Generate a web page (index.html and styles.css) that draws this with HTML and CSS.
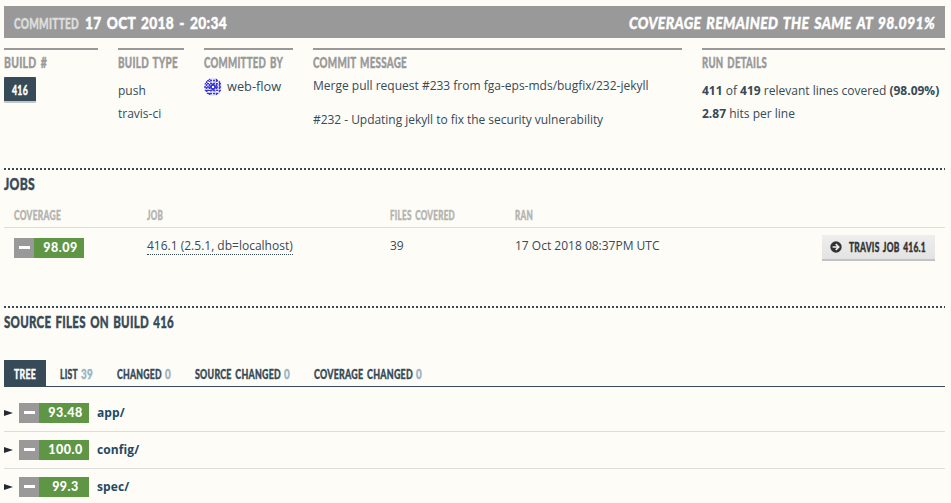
FILE: index.html
```html
<!DOCTYPE html>
<html lang="en">
<head>
<meta charset="utf-8">
<title>Build 416</title>
<link rel="stylesheet" href="styles.css">
</head>
<body>
<header class="banner">
  <div class="when">
    <svg class="cond muted" width="65" height="20"><text y="15" font-size="15" textLength="65" lengthAdjust="spacingAndGlyphs">COMMITTED</text></svg>
    <svg class="cond" width="142" height="20"><text y="15" font-size="17" textLength="142" lengthAdjust="spacingAndGlyphs">17 OCT 2018 - 20:34</text></svg>
  </div>
  <svg class="cond slanted" width="307" height="20"><text y="15" font-size="17" textLength="306" lengthAdjust="spacingAndGlyphs">COVERAGE REMAINED THE SAME AT 98.091%</text></svg>
</header>

<section class="details">
  <div class="detail">
    <svg class="cond label" width="43" height="20"><text y="15" font-size="14.5" textLength="43" lengthAdjust="spacingAndGlyphs">BUILD #</text></svg>
    <a class="build-no"><svg class="cond" width="16" height="20"><text y="15" font-size="13" textLength="16" lengthAdjust="spacingAndGlyphs">416</text></svg></a>
  </div>
  <div class="detail">
    <svg class="cond label" width="60" height="20"><text y="15" font-size="14.5" textLength="60" lengthAdjust="spacingAndGlyphs">BUILD TYPE</text></svg>
    <p class="spaced">push</p>
    <p>travis-ci</p>
  </div>
  <div class="detail">
    <svg class="cond label" width="79" height="20"><text y="15" font-size="14.5" textLength="79" lengthAdjust="spacingAndGlyphs">COMMITTED BY</text></svg>
    <div class="author">
      <svg class="avatar" width="18" height="18" viewBox="0 0 18 18">
        <defs><clipPath id="round"><circle cx="9" cy="9" r="9"/></clipPath></defs>
        <g clip-path="url(#round)">
          <rect width="18" height="18" fill="#e4e4fb"/>
          <path fill="none" stroke="#3b36d6" stroke-width="1.5" stroke-dasharray="2 1" d="M0 2.5h18M0 5.5h18M0 9h18M0 12.5h18M0 15.5h18M2.5 0v18M5.5 0v18M12.5 0v18M15.5 0v18"/>
          <path fill="#3b36d6" d="M7 7l2-2 2 2 2 2-2 2-2 2-2-2-2-2z"/>
          <path fill="#fff" d="M8 8h2v2H8zM4 4h2v1H4zM12 4h2v1h-2zM4 13h2v1H4zM12 13h2v1h-2z"/>
        </g>
      </svg>
      <span>web-flow</span>
    </div>
  </div>
  <div class="detail">
    <svg class="cond label" width="94" height="20"><text y="15" font-size="14.5" textLength="94" lengthAdjust="spacingAndGlyphs">COMMIT MESSAGE</text></svg>
    <p class="message">Merge pull request #233 from fga-eps-mds/bugfix/232-jekyll</p>
    <p class="message second">#232 - Updating jekyll to fix the security vulnerability</p>
  </div>
  <div class="detail">
    <svg class="cond label" width="65" height="20"><text y="15" font-size="14.5" textLength="65" lengthAdjust="spacingAndGlyphs">RUN DETAILS</text></svg>
    <p class="spaced"><b>411</b> of <b>419</b> relevant lines covered <b>(98.09%)</b></p>
    <p><b>2.87</b> hits per line</p>
  </div>
</section>

<section class="jobs">
  <svg class="cond title" width="31" height="24"><text y="20" font-size="17" textLength="31" lengthAdjust="spacingAndGlyphs">JOBS</text></svg>
  <div class="job-grid head">
    <svg class="cond" width="47" height="20"><text y="15" font-size="12.5" textLength="47" lengthAdjust="spacingAndGlyphs">COVERAGE</text></svg>
    <svg class="cond" width="16" height="20"><text y="15" font-size="12.5" textLength="16" lengthAdjust="spacingAndGlyphs">JOB</text></svg>
    <svg class="cond" width="65" height="20"><text y="15" font-size="12.5" textLength="65" lengthAdjust="spacingAndGlyphs">FILES COVERED</text></svg>
    <svg class="cond" width="18" height="20"><text y="15" font-size="12.5" textLength="18" lengthAdjust="spacingAndGlyphs">RAN</text></svg>
  </div>
  <div class="job-grid row">
    <span class="badge"><i></i><b>98.09</b></span>
    <span><a class="job-link">416.1 (2.5.1, db=localhost)</a></span>
    <span>39</span>
    <span>17 Oct 2018 08:37PM UTC</span>
    <a class="travis">
      <svg width="12" height="12" viewBox="0 0 12 12"><circle cx="6" cy="6" r="5.7" fill="#333"/><path d="M2.6 6h5.8M5.8 3.1L8.7 6 5.8 8.9" fill="none" stroke="#eee" stroke-width="1.7"/></svg>
      <svg class="cond" width="77" height="20"><text y="15" font-size="13" textLength="77" lengthAdjust="spacingAndGlyphs">TRAVIS JOB 416.1</text></svg>
    </a>
  </div>
</section>

<section class="files">
  <svg class="cond title" width="170" height="24"><text y="20" font-size="17" textLength="170" lengthAdjust="spacingAndGlyphs">SOURCE FILES ON BUILD 416</text></svg>
  <nav class="tabs">
    <a class="tab active"><svg class="cond" width="22" height="20"><text y="15" font-size="13.5" textLength="22" lengthAdjust="spacingAndGlyphs">TREE</text></svg></a>
    <a class="tab"><svg class="cond" width="18" height="20"><text y="15" font-size="13.5" textLength="18" lengthAdjust="spacingAndGlyphs">LIST</text></svg><svg class="cond count" width="12" height="20"><text y="15" font-size="13.5" textLength="12" lengthAdjust="spacingAndGlyphs">39</text></svg></a>
    <a class="tab"><svg class="cond" width="45" height="20"><text y="15" font-size="13.5" textLength="45" lengthAdjust="spacingAndGlyphs">CHANGED</text></svg><svg class="cond count" width="6" height="20"><text y="15" font-size="13.5" textLength="6" lengthAdjust="spacingAndGlyphs">0</text></svg></a>
    <a class="tab"><svg class="cond" width="86" height="20"><text y="15" font-size="13.5" textLength="86" lengthAdjust="spacingAndGlyphs">SOURCE CHANGED</text></svg><svg class="cond count" width="6" height="20"><text y="15" font-size="13.5" textLength="6" lengthAdjust="spacingAndGlyphs">0</text></svg></a>
    <a class="tab"><svg class="cond" width="99" height="20"><text y="15" font-size="13.5" textLength="99" lengthAdjust="spacingAndGlyphs">COVERAGE CHANGED</text></svg><svg class="cond count" width="6" height="20"><text y="15" font-size="13.5" textLength="6" lengthAdjust="spacingAndGlyphs">0</text></svg></a>
  </nav>
  <div class="file"><svg class="arrow" width="9" height="6"><path d="M0 0l9 3-9 3z"/></svg><span class="badge"><i></i><b>93.48</b></span><a>app/</a></div>
  <div class="file"><svg class="arrow" width="9" height="6"><path d="M0 0l9 3-9 3z"/></svg><span class="badge"><i></i><b>100.0</b></span><a>config/</a></div>
  <div class="file"><svg class="arrow" width="9" height="6"><path d="M0 0l9 3-9 3z"/></svg><span class="badge"><i></i><b>99.3</b></span><a>spec/</a></div>
</section>
</body>
</html>
```
FILE: styles.css
```css
* { box-sizing: border-box; }
html { overflow: hidden; }
body {
  margin: 0;
  padding: 6px 6px 0 4px;
  height: 503px;
  overflow: hidden;
  background: #fdfcf7;
  color: #364a57;
  font: 12px/23px "Open Sans", sans-serif;
}
p { margin: 0; white-space: nowrap; }
svg { display: block; flex: none; }
.cond { overflow: visible; fill: currentColor; stroke: currentColor; stroke-width: .4px; font-family: Lato, sans-serif; font-weight: 900; word-spacing: 2px; letter-spacing: .4px; }

.banner { display: flex; justify-content: space-between; height: 32px; padding: 8px 9px 0 10px; background: #999; color: #fff; }
.when { display: flex; gap: 6px; }
.muted { color: #ddd; }
.slanted { font-style: italic; }

.details { display: grid; grid-template-columns: 94px 66px 89px 369px 243px; column-gap: 20px; height: 120px; margin-top: 10px; }
.detail { border-top: 2px solid #999; padding-top: 3px; }
.label { color: #999; }
.build-no { display: flex; width: 32px; height: 26px; margin-top: 4px; padding: 3px 8px 0; background: #364a57; border-bottom: 2px solid #c4c6c5; border-radius: 1px; color: #fff; }
.spaced { margin-top: 6px; }
.author { display: flex; gap: 5px; margin-top: 2px; font-size: 12.8px; }
.avatar { margin-top: 3px; }
.message { line-height: 17px; margin-top: 4px; }
.message.second { margin-top: 17px; letter-spacing: -.04px; }

.jobs, .files { padding-top: 2px; background: repeating-linear-gradient(90deg, #364a57 0 2px, transparent 2px 4px) 0 0 / 100% 2px no-repeat; }
.jobs { height: 138px; }
.title { color: #364a57; }
.job-grid { display: grid; grid-template-columns: 133px 243px 125px 307px 113px; padding-left: 10px; }
.head { height: 34px; padding-top: 11px; border-bottom: 1px solid #ddddd9; color: #b3b3af; }
.row { line-height: 18px; padding-top: 9px; }
.badge { display: flex; width: 70px; height: 20px; background: #5f9646; }
.row .badge { margin-top: 1px; }
.badge i { width: 20px; height: 20px; padding: 8px 4px 0 5px; background: #999; }
.badge i::before { content: ""; display: block; height: 3px; background: #fff; }
.badge b { flex: 1; padding-left: 3px; color: #fff; font: 900 12.5px/19px Lato, sans-serif; letter-spacing: .5px; text-align: center; }
.job-link { display: inline-block; height: 18px; border-bottom: 1px dotted #364a57; }
.travis { display: flex; align-items: center; gap: 7px; height: 26px; padding-left: 8px; margin-top: -2px; background: linear-gradient(#eee, #e3e3e3); border-bottom: 2px solid #c3c3c3; color: #333; }

.tabs { display: flex; height: 27px; margin-top: 28px; border-bottom: 1px solid #364a57; }
.tab { display: flex; gap: 3px; padding: 4px 12px 0; }
.tab.active { padding: 4px 10px 0; margin-right: 2px; background: #364a57; color: #fff; }
.count { color: #9ab3c1; }
.file { display: flex; align-items: center; height: 37px; border-bottom: 1px solid #ddddd9; }
.tabs + .file { height: 45px; padding-top: 8px; }
.file .badge { margin: 0 8px 0 6px; }
.file a { margin-top: -1px; color: #1f4a63; font-weight: 700; letter-spacing: .1px; }
.arrow { fill: #252a30; }
```
